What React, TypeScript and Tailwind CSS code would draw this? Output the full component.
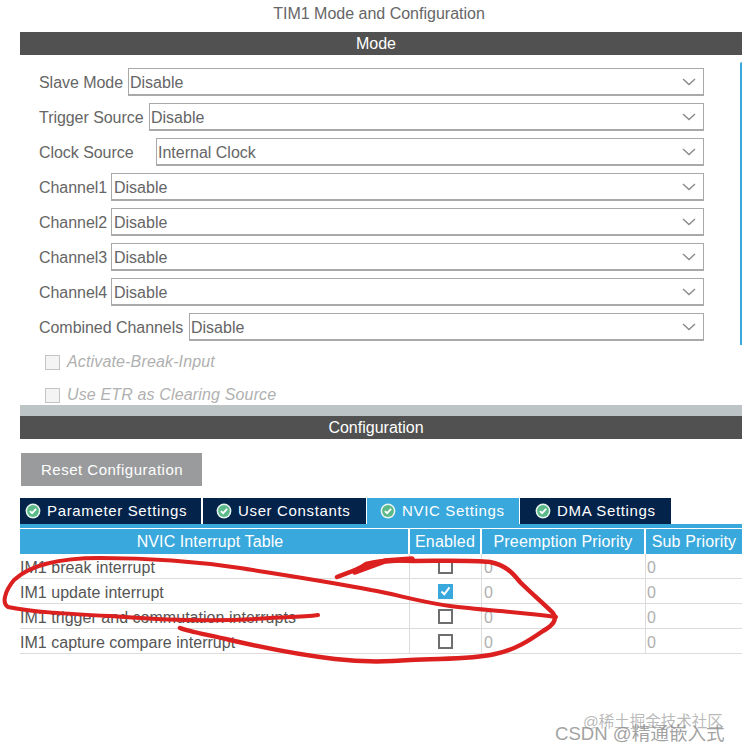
import React from "react";

const font = "font-['Liberation_Sans',Arial,sans-serif]";

const modeRows = [
  { label: "Slave Mode", value: "Disable", left: "w-[128px]", pad: "pl-[1px]" },
  { label: "Trigger Source", value: "Disable", left: "w-[149px]", pad: "pl-[1px]" },
  { label: "Clock Source", value: "Internal Clock", left: "w-[156px]", pad: "pl-[1px]" },
  { label: "Channel1", value: "Disable", left: "w-[111px]", pad: "pl-[2px]" },
  { label: "Channel2", value: "Disable", left: "w-[111px]", pad: "pl-[2px]" },
  { label: "Channel3", value: "Disable", left: "w-[111px]", pad: "pl-[2px]" },
  { label: "Channel4", value: "Disable", left: "w-[111px]", pad: "pl-[2px]" },
  { label: "Combined Channels", value: "Disable", left: "w-[189px]", pad: "pl-[1px]" },
];

const tabs = [
  { label: "Parameter Settings", box: "w-[181px] pl-[5px] mr-[2px]", active: false },
  { label: "User Constants", box: "w-[163px] pl-[13px] mr-[1px]", active: false },
  { label: "NVIC Settings", box: "w-[152px] pl-[13px] mr-[1px]", active: true },
  { label: "DMA Settings", box: "w-[151px] pl-[15px]", active: false },
];

const interrupts = [
  { name: "IM1 break interrupt", checked: false },
  { name: "IM1 update interrupt", checked: true },
  { name: "IM1 trigger and commutation interrupts", checked: false },
  { name: "IM1 capture compare interrupt", checked: false },
];

const Chevron = () => (
  <svg width="14" height="8" viewBox="0 0 14 8" fill="none" className="mr-[7px] shrink-0">
    <path d="M1 1l6 5.5L13 1" stroke="#8a8a8a" strokeWidth="1.4" />
  </svg>
);

const TabCheck = () => (
  <svg width="16" height="16" viewBox="0 0 16 16" className="shrink-0">
    <circle cx="8" cy="8" r="7.4" fill="#e8f5ee" />
    <circle cx="8" cy="8" r="5.9" fill="#5cb98a" />
    <path d="M4.9 8.1l2.2 2.1 4-4.3" fill="none" stroke="#fff" strokeWidth="1.9" />
  </svg>
);

const SectionBar = ({ title }: { title: string }) => (
  <div className="ml-5 h-[23px] pr-[10px] bg-[#505150] text-white text-[16px] leading-[23px] text-center">{title}</div>
);

const DisabledCheck = ({ label, className }: { label: string; className: string }) => (
  <div className={`flex items-center pl-[45px] ${className}`}>
    <span className="w-[15px] h-[15px] border border-[#c4c4c4] bg-[#f4f4f4]" />
    <span className="ml-[7px] text-[16px] italic text-[#b0b0b0] tracking-[0.15px]">{label}</span>
  </div>
);

export default function App() {
  return (
    <div className={`relative w-[742px] h-[753px] overflow-hidden bg-white ${font} text-[#5a5a5a]`}>
      <div className="h-[32px] pt-[4px] pl-[16px] text-center text-[16px] leading-[20px] text-[#666]">
        TIM1 Mode and Configuration
      </div>
      <SectionBar title="Mode" />

      {/* mode panel */}
      <div className="relative h-[350px] pt-[13px]">
        <div className="absolute right-0 top-[7px] w-[2px] h-[283px] bg-[#39a8dc] rounded-tl" />
        <div className="flex flex-col gap-[7px]">
          {modeRows.map((r) => (
            <div key={r.label} className="flex h-[28px] w-[704px] items-center">
              <div className={`${r.left} shrink-0 pl-[39px] pt-[1px] text-[16px] tracking-[-0.05px] text-[#666] whitespace-nowrap`}>
                {r.label}
              </div>
              <div className={`flex-1 h-[28px] flex items-center justify-between ${r.pad} border border-[#a9a9a9] border-b-2 text-[16px] text-[#666]`}>
                <span className="pt-[2px]">{r.value}</span>
                <Chevron />
              </div>
            </div>
          ))}
        </div>
        <DisabledCheck label="Activate-Break-Input" className="h-[20px] mt-[11px]" />
        <DisabledCheck label="Use ETR as Clearing Source" className="h-[20px] mt-[13px]" />
      </div>

      <div className="ml-5 h-[11px] bg-[#bcc4c6]" />
      <SectionBar title="Configuration" />

      <div className="h-[59px] pl-[21px] pt-[14px]">
        <div className="w-[181px] h-[33px] bg-[#9a9b9d] text-white text-[15px] leading-[33px] pl-[20px] tracking-[0.5px]">
          Reset Configuration
        </div>
      </div>

      {/* tabs */}
      <div className="ml-5 flex h-[26px]">
        {tabs.map((t) => (
          <div
            key={t.label}
            className={`${t.box} flex items-center gap-[6px] text-[15px] tracking-[0.65px] text-white ${
              t.active ? "bg-[#39a8dc]" : "bg-[#03234b]"
            }`}
          >
            <TabCheck />
            <span className="whitespace-nowrap">{t.label}</span>
          </div>
        ))}
      </div>
      <div className="ml-5 h-[4px] bg-[#39a8dc]" />

      {/* table */}
      <div className="ml-5 mt-[1px] grid grid-cols-[390px_72px_164px_96px] text-[16px]">
        <div className="h-[25px] mr-[2px] pr-[8px] pt-[1px] bg-[#39a8dc] text-white text-center leading-[24px] tracking-[0.1px]">
          NVIC Interrupt Table
        </div>
        <div className="h-[25px] mr-[2px] pt-[1px] bg-[#39a8dc] text-white text-center leading-[24px] tracking-[0.2px]">Enabled</div>
        <div className="h-[25px] mr-[2px] pt-[1px] bg-[#39a8dc] text-white text-center leading-[24px] tracking-[0.15px]">
          Preemption Priority
        </div>
        <div className="h-[25px] pt-[1px] bg-[#39a8dc] text-white text-center leading-[24px] tracking-[0.15px] whitespace-nowrap">
          Sub Priority
        </div>
        {interrupts.map((row) => (
          <React.Fragment key={row.name}>
            <div className="h-[25px] pt-[2px] border-b border-r border-[#dcdcdc] leading-[23px] tracking-[0.03px] text-[#555] whitespace-nowrap">
              {row.name}
            </div>
            <div className="h-[25px] border-b border-r border-[#dcdcdc] flex items-center justify-center pr-[1px]">
              {row.checked ? (
                <span className="w-[15px] h-[15px] bg-[#39a8dc] flex items-center justify-center">
                  <svg width="11" height="10" viewBox="0 0 11 10">
                    <path d="M1.5 5.5l2.8 2.8 5.2-7" fill="none" stroke="#fff" strokeWidth="2" />
                  </svg>
                </span>
              ) : (
                <span className="w-[15px] h-[15px] border-2 border-[#6e6e6e]" />
              )}
            </div>
            <div className="h-[25px] pt-[2px] border-b border-r border-[#dcdcdc] leading-[23px] pl-[2px] text-[#b0b0b0]">0</div>
            <div className="h-[25px] pt-[2px] border-b border-[#dcdcdc] leading-[23px] pl-[1px] text-[#b0b0b0]">0</div>
          </React.Fragment>
        ))}
      </div>

      {/* red pen annotation */}
      <svg className="absolute inset-0 pointer-events-none" width="742" height="753" viewBox="0 0 742 753" fill="none">
        <path
          d="M337 577C350 572 358 570 366 564C378 561 395 560 413 561C440 561 470 560 490 562C505 565 512 572 520 582C530 592 545 605 553 613C558 620 552 626 543 631C530 640 515 650 495 654C470 660 440 658 410 660C385 662 360 662 335 659C300 655 265 648 230 640C210 635 190 632 180 628"
          stroke="#dc1f1f"
          strokeWidth="4.5"
          strokeLinecap="round"
          strokeLinejoin="round"
        />
        <path d="M355 572L385 561L412 559" stroke="#dc1f1f" strokeWidth="5.5" strokeLinecap="round" />
        <path
          d="M556 617C520 612 480 610 450 606C420 602 395 594 371 590C330 582 290 576 240 568C200 562 150 558 100 558C60 558 30 565 14 580C4 592 2 604 8 607C30 612 70 614 110 616C160 620 220 622 270 618C290 617 305 617 318 615"
          stroke="#dc1f1f"
          strokeWidth="4"
          strokeLinecap="round"
          strokeLinejoin="round"
        />
      </svg>

      {/* watermark */}
      <div className="absolute left-[583px] top-[713px] text-[15.5px] leading-[18px] text-[#9a9a9a]/70 whitespace-nowrap font-['Liberation_Sans','Noto_Sans_CJK_SC',sans-serif]">
        @稀土掘金技术社区
      </div>
      <div className="absolute left-[555px] top-[723px] text-[18.6px] leading-[22px] text-[#8a8a8a]/80 whitespace-nowrap font-['Liberation_Sans','Noto_Sans_CJK_SC',sans-serif]">
        CSDN @精通嵌入式
      </div>
    </div>
  );
}
